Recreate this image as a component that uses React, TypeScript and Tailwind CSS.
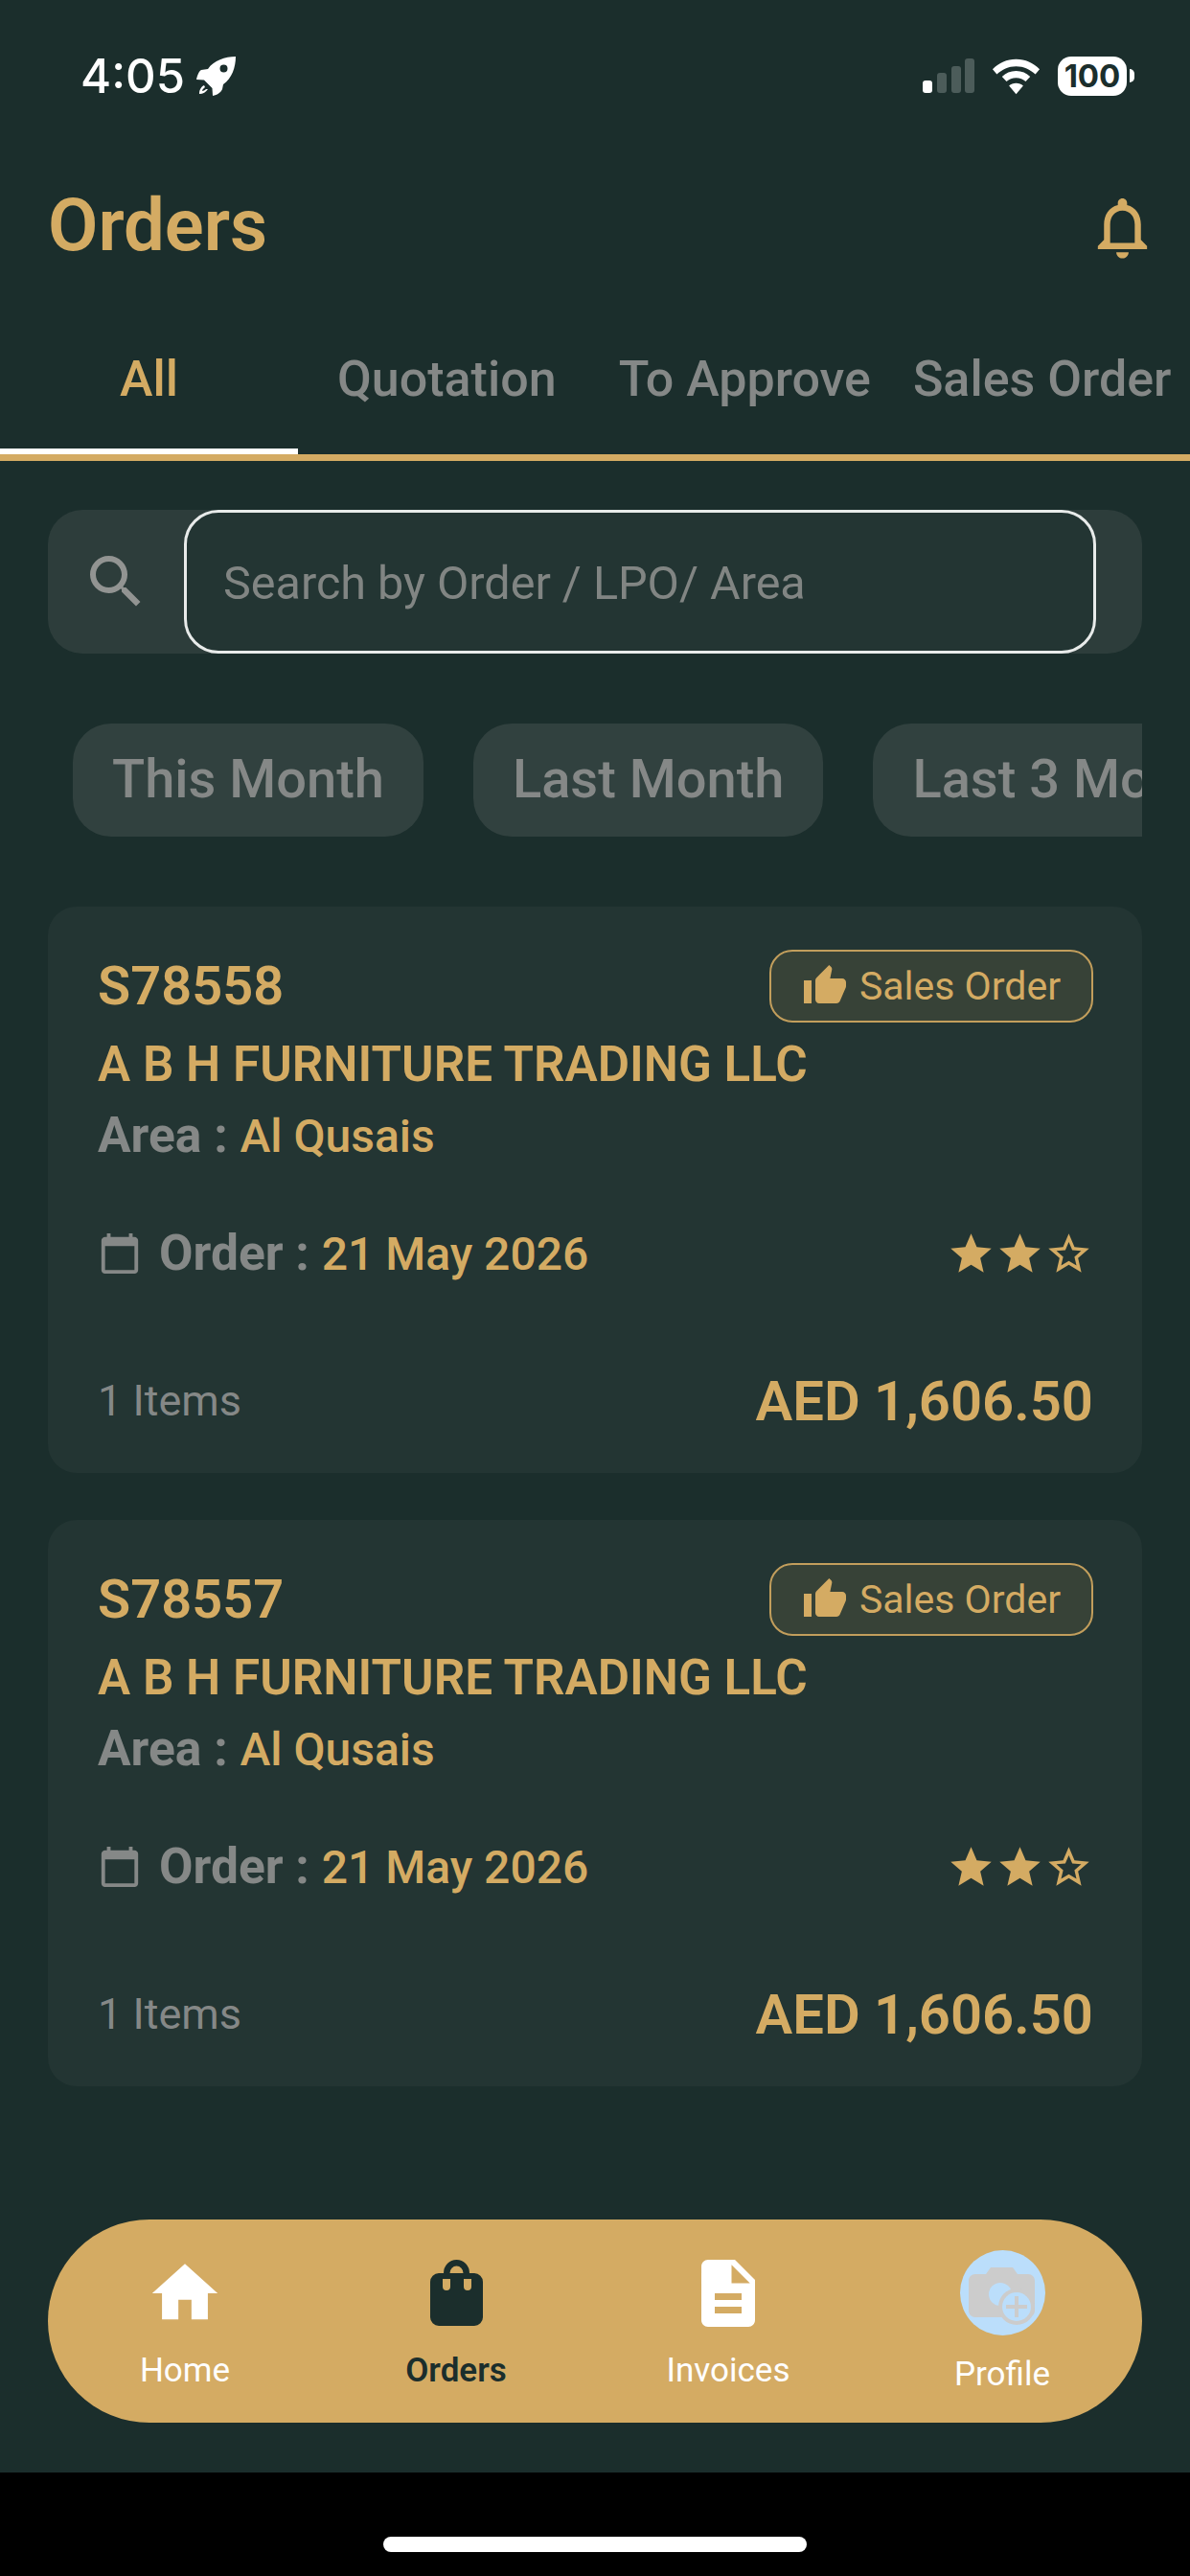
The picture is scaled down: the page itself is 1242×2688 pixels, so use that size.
import {
  MdCalendarToday,
  MdDescription,
  MdHome,
  MdOutlineNotifications,
  MdSearch,
  MdStar,
  MdStarBorder,
  MdThumbUp,
} from "react-icons/md";

const orders = [
  { id: "S78558", customer: "A B H FURNITURE TRADING LLC", area: "Al Qusais", date: "21 May 2026", items: "1 Items", total: "AED 1,606.50" },
  { id: "S78557", customer: "A B H FURNITURE TRADING LLC", area: "Al Qusais", date: "21 May 2026", items: "1 Items", total: "AED 1,606.50" },
];

function StatusBar() {
  return (
    <div className="h-[170px] pl-[84px] pr-[58px] pt-[53px] flex justify-between items-start text-white">
      <div className="flex items-center gap-[12px] h-[52px]">
        <span className="font-['Inter',sans-serif] font-medium text-[49px] leading-none">4:05</span>
        <svg width="42" height="42" viewBox="0 0 42 42" fill="#ffffff">
          <path
            fillRule="evenodd"
            d="M41 1C30 1 18 5 12 14L5 15C3 16 1 20 0 25L8 25.500L16.500 34L17 42C22 41 26 38 27 35L28 30C37 24 41 12 41 1ZM28.500 9.500a4 4 0 1 1 0 8a4 4 0 0 1 0-8Z"
          />
          <path d="M8 31C4 33 3 37 3 40C7 40 10 38 12 35L10 35C9 36 7 37 6 37C6 35 8 34 9 33Z" />
        </svg>
      </div>
      <div className="flex items-center h-[52px]">
        <svg width="54" height="36" viewBox="0 0 54 36" className="mr-[18px]">
          <rect x="0" y="23" width="10" height="13" rx="3" fill="#ffffff" />
          <rect x="15" y="15" width="10" height="21" rx="3" fill="#4c5c5a" />
          <rect x="30" y="8" width="10" height="28" rx="3" fill="#4c5c5a" />
          <rect x="44" y="0" width="10" height="36" rx="3" fill="#4c5c5a" />
        </svg>
        <svg width="51" height="39" viewBox="0 0 52 38" className="mr-[18px]">
          <path d="M26 1C16 1 8 5 1 11.500l4.500 5.500C11 12 18 8.500 26 8.500S41 12 46.500 17l4.500-5.500C44 5 36 1 26 1Z" fill="#ffffff" />
          <path d="M26 13.500c-6 0-11 2.300-15 6l4.800 5.200c2.700-2.500 6.200-4 10.200-4s7.500 1.500 10.200 4l4.800-5.200c-4-3.700-9-6-15-6Z" fill="#ffffff" />
          <path d="M26 26.500c-3 0-5.500 1-7.500 2.800L26 38l7.500-8.700C31.500 27.500 29 26.500 26 26.500Z" fill="#ffffff" />
        </svg>
        <div className="w-[72px] h-[41px] rounded-[14px] bg-white flex items-center justify-center">
          <span className="font-['Inter',sans-serif] font-bold text-[33px] leading-none text-[#1b2e2c]">100</span>
        </div>
        <div className="w-[5px] h-[14px] ml-[3px] rounded-r-full bg-white" />
      </div>
    </div>
  );
}

function Tabs() {
  return (
    <div className="border-b-[7px] border-[#d4ab63] h-[151px] relative flex font-medium text-[52px] leading-none text-[#858887] whitespace-nowrap">
      <div className="w-[311px] flex justify-center pt-[40px] text-[#d4ab63]">All</div>
      <div className="ml-[41px] pt-[40px]">Quotation</div>
      <div className="ml-[65px] pt-[40px]">To Approve</div>
      <div className="ml-[44px] pt-[40px]">Sales Order</div>
      <div className="absolute left-0 bottom-0 w-[311px] h-[6px] bg-white" />
    </div>
  );
}

function OrderCard({ order }: { order: (typeof orders)[number] }) {
  return (
    <div className="h-[591px] rounded-[30px] bg-[#233533] pl-[52px] pr-[51px] pt-[45px] flex flex-col">
      <div className="flex justify-between items-center h-[76px]">
        <span className="font-semibold text-[56px] text-[#d4ab63]">{order.id}</span>
        <div className="w-[338px] h-[76px] rounded-[24px] border-2 border-[#c29e5c] bg-[#374237] flex items-center justify-center gap-[12px] text-[41px] text-[#d4ab63]">
          <MdThumbUp className="w-[48px] h-[48px]" />
          <span className="pt-[2px]">Sales Order</span>
        </div>
      </div>
      <div className="mt-[9px] font-semibold text-[51.200px] leading-[70px] text-[#d4ab63] whitespace-nowrap">{order.customer}</div>
      <div className="mt-[6px] text-[48px] leading-[66px] font-medium text-[#d4ab63]">
        <span className="font-bold text-[51.500px] text-[#858887]">Area : </span>
        {order.area}
      </div>
      <div className="mt-[56px] flex justify-between items-center h-[66px]">
        <div className="flex items-center gap-[18px] text-[48px] font-medium text-[#d4ab63]">
          <MdCalendarToday className="w-[46px] h-[46px] text-[#858887]" />
          <div>
            <span className="font-bold text-[51.500px] text-[#858887]">Order : </span>
            {order.date}
          </div>
        </div>
        <div className="flex items-center text-[#d4ab63]">
          <MdStar className="w-[51px] h-[51px]" />
          <MdStar className="w-[51px] h-[51px]" />
          <MdStarBorder className="w-[51px] h-[51px]" />
        </div>
      </div>
      <div className="mt-[86px] flex justify-between items-center h-[70px]">
        <span className="text-[45px] text-[#858887]">{order.items}</span>
        <span className="font-semibold text-[58px] text-[#d4ab63]">{order.total}</span>
      </div>
    </div>
  );
}

function BottomNav() {
  return (
    <div className="mx-[50px] mt-auto mb-[52px] h-[212px] rounded-[106px] bg-[#d4ab63] flex text-[35px] leading-none text-white">
      <div className="w-[93px]" />
      <div className="w-[100px] flex flex-col items-center pt-[36px]">
        <MdHome className="w-[82px] h-[82px] shrink-0" />
        <span className="mt-[22px]">Home</span>
      </div>
      <div className="w-[183px]" />
      <div className="w-[100px] flex flex-col items-center pt-[42px] text-[#1b2e2c] font-semibold whitespace-nowrap">
        <svg width="55" height="69" viewBox="0 0 55 69" className="shrink-0" fill="#1b2e2c">
          <path
            fillRule="evenodd"
            d="M9 14H46a9 9 0 0 1 9 9V60a9 9 0 0 1-9 9H9a9 9 0 0 1-9-9V23a9 9 0 0 1 9-9ZM13 20h8v8a4 4 0 0 1-8 0ZM35 20h8v8a4 4 0 0 1-8 0Z"
          />
          <path fillRule="evenodd" d="M14 14a13.500 14 0 0 1 27 0ZM20.500 14h14a7 7.500 0 0 0-14 0Z" />
        </svg>
        <span className="mt-[29px]">Orders</span>
      </div>
      <div className="w-[184px]" />
      <div className="w-[100px] flex flex-col items-center pt-[35px] whitespace-nowrap">
        <MdDescription className="w-[84px] h-[84px] shrink-0" />
        <span className="mt-[21px]">Invoices</span>
      </div>
      <div className="w-[186px]" />
      <div className="w-[100px] flex flex-col items-center pt-[32px] whitespace-nowrap">
        <div className="w-[89px] h-[89px] shrink-0 rounded-full bg-[#bbdefb] flex items-center justify-center">
          <svg width="72" height="66" viewBox="0 -5 72 66">
            <path d="M8 8h11l5-7h23l5 7h11c4 0 7 3 7 7v31c0 4-3 7-7 7H8c-4 0-7-3-7-7V15c0-4 3-7 7-7Z" fill="#cccccc" />
            <circle cx="34" cy="29" r="12" fill="#bbdefb" />
            <circle cx="51" cy="42" r="19" fill="#cccccc" />
            <circle cx="51" cy="42" r="15" fill="#bbdefb" />
            <path d="M49 31h4v9h9v4h-9v9h-4v-9h-9v-4h9Z" fill="#cccccc" />
          </svg>
        </div>
        <span className="mt-[23px]">Profile</span>
      </div>
    </div>
  );
}

export default function App() {
  return (
    <div className="w-[1242px] h-[2688px] bg-black flex flex-col font-['Roboto',sans-serif]">
      <div className="h-[2580px] bg-[#1b2e2c] flex flex-col">
        <StatusBar />
        <div className="h-[160px] pl-[50px] pr-[32px] flex justify-between items-start">
          <h1 className="font-semibold text-[76px] leading-none text-[#d4ab63] pt-[27px]">Orders</h1>
          <MdOutlineNotifications className="w-[77px] h-[77px] text-[#d4ab63] mt-[29px]" />
        </div>
        <Tabs />

        <div className="mx-[50px] mt-[51px] h-[150px] rounded-[36px] bg-[#2d3d3b] flex pr-[48px]">
          <div className="w-[142px] flex items-center justify-center">
            <MdSearch className="w-[72px] h-[72px] text-[#929492]" />
          </div>
          <div className="flex-1 rounded-[36px] border-[3px] border-[#e8ebea] bg-[#233533] flex items-center pl-[38px] pt-[4px] text-[48.500px] text-[#818583]">
            Search by Order / LPO/ Area
          </div>
        </div>

        <div className="mx-[50px] mt-[73px] overflow-hidden flex gap-[52px] pl-[26px] h-[118px] text-[56px] font-medium text-[#858887] whitespace-nowrap">
          <div className="px-[41px] pb-[2px] shrink-0 rounded-[40px] bg-[#31413f] flex items-center">This Month</div>
          <div className="px-[41px] pb-[2px] shrink-0 rounded-[40px] bg-[#31413f] flex items-center">Last Month</div>
          <div className="px-[41px] pb-[2px] shrink-0 rounded-[40px] bg-[#31413f] flex items-center">Last 3 Months</div>
        </div>

        <div className="mx-[50px] mt-[73px] flex flex-col gap-[49px]">
          {orders.map((o) => (
            <OrderCard key={o.id} order={o} />
          ))}
        </div>

        <BottomNav />
      </div>
      <div className="flex-1 flex justify-center pt-[67px]">
        <div className="w-[442px] h-[16px] rounded-full bg-white" />
      </div>
    </div>
  );
}
